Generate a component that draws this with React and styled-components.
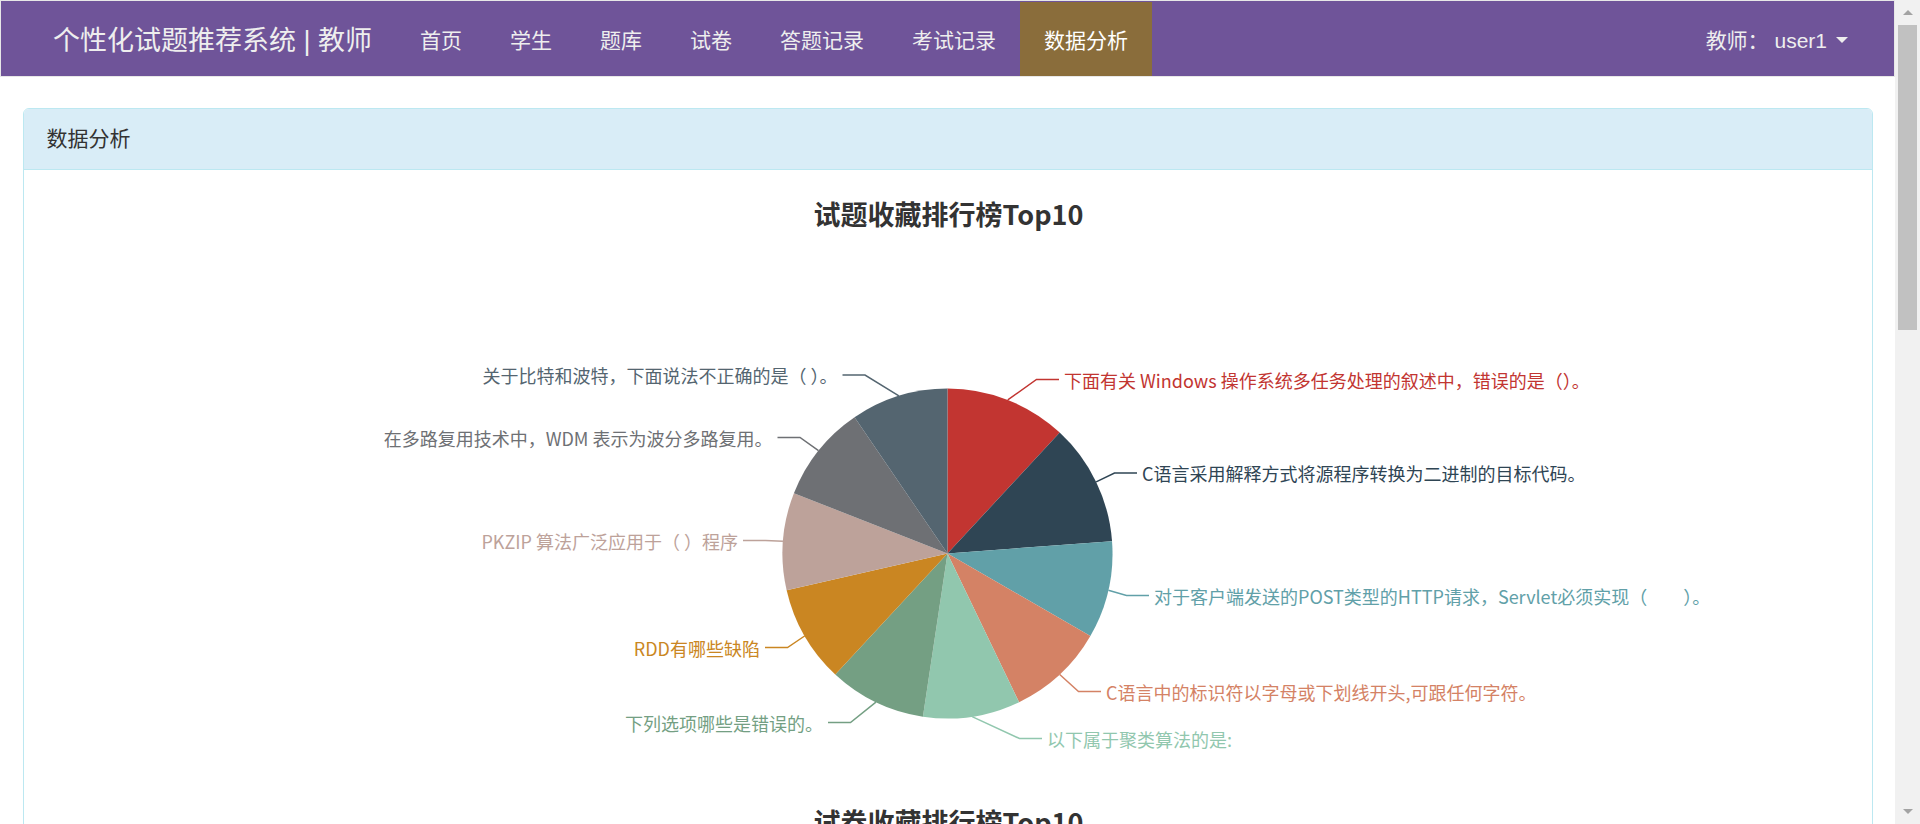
import React from 'react';
import styled, { createGlobalStyle } from 'styled-components';

const GlobalStyle = createGlobalStyle`
  * { box-sizing: border-box; }
  html, body { margin: 0; padding: 0; overflow: hidden; background: #fff; }
  body {
    font-family: "Liberation Sans", "Noto Sans CJK SC", sans-serif;
    font-size: 21px;
    color: #333;
  }
`;

const Shell = styled.div`
  display: flex;
  height: 100vh;
  overflow: hidden;
`;

const Page = styled.div`
  flex: 1;
  min-width: 0;
`;

const Navbar = styled.nav`
  display: flex;
  align-items: stretch;
  height: 77px;
  padding: 0 22px;
  margin-bottom: 31px;
  background: #6f5499;
  border: 1px solid #e7e7e7;
`;

const Brand = styled.div`
  display: flex;
  align-items: center;
  padding: 0 24px 0 30px;
  font-size: 27px;
  color: #eee;
  white-space: nowrap;
`;

const NavList = styled.ul`
  display: flex;
  margin: 0;
  padding: 0;
  list-style: none;
`;

const NavLink = styled.li`
  display: flex;
  align-items: center;
  padding: 0 24px;
  border-top: 1px solid transparent;
  background: ${(p) => (p.$active ? '#8a6d3b' : 'transparent')};
  background-clip: padding-box;
  color: ${(p) => (p.$active ? '#fff' : '#eee')};
  white-space: nowrap;
`;

const UserMenu = styled.div`
  display: flex;
  align-items: center;
  margin-left: auto;
  padding: 0 24px;
  color: #eee;
  white-space: pre;
`;

const Caret = styled.span`
  display: inline-block;
  width: 0;
  height: 0;
  margin-left: 9px;
  margin-top: 3px;
  border-top: 6px solid #eee;
  border-left: 6px solid transparent;
  border-right: 6px solid transparent;
`;

const Panel = styled.div`
  margin: 0 22px 59px 23px;
  border: 1px solid #bce8f1;
  border-radius: 6px;
`;

const PanelHeading = styled.div`
  padding: 15px 22.5px;
  line-height: 30px;
  font-size: 21px;
  color: #333;
  background: #d9edf7;
  border-bottom: 1px solid #bce8f1;
  border-radius: 5px 5px 0 0;
`;

const PanelBody = styled.div`
  display: flex;
  flex-direction: column;
  gap: 8px;
  padding: 22.5px;
`;

const ChartBox = styled.svg`
  display: block;
  width: 100%;
  height: 600px;
`;

const Rail = styled.div`
  display: flex;
  flex-direction: column;
  flex: 0 0 25px;
  height: 100vh;
  background: #f1f1f1;
`;

const ArrowBtn = styled.div`
  display: flex;
  align-items: center;
  justify-content: center;
  height: 25px;
  &::after {
    content: '';
    width: 0;
    height: 0;
    border-left: 5px solid transparent;
    border-right: 5px solid transparent;
    ${(p) => (p.$down ? 'border-top: 5px solid #a3a3a3;' : 'border-bottom: 5px solid #a3a3a3;')}
  }
`;

const Thumb = styled.div`
  height: 305px;
  margin: 0 3px;
  background: #c1c1c1;
`;

const RailSpace = styled.div`
  flex: 1;
`;

const PALETTE = ['#c23531', '#2f4554', '#61a0a8', '#d48265', '#91c7ae', '#749f83', '#ca8622', '#bda29a', '#6e7074', '#546570'];

const W = 1803;
const CX = 900.5;
const CY = 360.5;
const R = 165;

// bend point + end of the label line, as ECharts laid them out
const questionData = [
  { name: '下面有关 Windows 操作系统多任务处理的叙述中，错误的是（）。', value: 5, bend: [989.5, 186.5] },
  { name: 'C语言采用解释方式将源程序转换为二进制的目标代码。', value: 5, bend: [1067.5, 280] },
  { name: '对于客户端发送的POST类型的HTTP请求，Servlet必须实现（　　）。', value: 4, bend: [1079.5, 402.5] },
  { name: 'C语言中的标识符以字母或下划线开头,可跟任何字符。', value: 4, bend: [1031.5, 498.5] },
  { name: '以下属于聚类算法的是:', value: 4, bend: [972.5, 545.5] },
  { name: '下列选项哪些是错误的。', value: 4, bend: [803.5, 529.5] },
  { name: 'RDD有哪些缺陷', value: 4, bend: [740.5, 454.5] },
  { name: 'PKZIP 算法广泛应用于（ ）程序', value: 4, bend: [718.5, 347.5] },
  { name: '在多路复用技术中，WDM 表示为波分多路复用。', value: 4, bend: [753, 244.5] },
  { name: '关于比特和波特，下面说法不正确的是（ ）。', value: 4, bend: [818, 182] },
];

const paperData = [
  { name: '计算机网络期末测试', value: 6 },
  { name: 'C语言程序设计模拟卷', value: 5 },
  { name: '数据结构单元测验', value: 4 },
  { name: 'Java Web 开发综合练习', value: 4 },
  { name: '操作系统期中考试', value: 3 },
  { name: '大数据技术基础', value: 3 },
];

const answerData = [
  { name: 'user1', value: 8 },
  { name: 'user2', value: 6 },
  { name: 'user3', value: 5 },
  { name: 'user4', value: 4 },
  { name: 'user5', value: 3 },
];

const pt = (deg, r) => {
  const a = (deg * Math.PI) / 180;
  return [CX + r * Math.sin(a), CY - r * Math.cos(a)];
};

const slicePath = (a0, a1) => {
  const [x0, y0] = pt(a0, R);
  const [x1, y1] = pt(a1, R);
  const large = a1 - a0 > 180 ? 1 : 0;
  return `M${CX},${CY} L${x0},${y0} A${R},${R} 0 ${large} 1 ${x1},${y1} Z`;
};

const PieChart = ({ title, data }) => {
  const total = data.reduce((s, d) => s + d.value, 0);
  let start = 0;
  const slices = data.map((d, i) => {
    const a0 = start;
    const a1 = start + (d.value / total) * 360;
    start = a1;
    const mid = (a0 + a1) / 2;
    const edge = pt(mid, R);
    const right = mid < 180;
    const bend = d.bend || pt(mid, R + 22.5);
    const endX = bend[0] + (right ? 22.5 : -22.5);
    return { ...d, a0, a1, edge, bend, endX, right, color: PALETTE[i % PALETTE.length] };
  });

  return (
    <ChartBox viewBox={`0 0 ${W} 600`}>
      <text x={W / 2} y={20} textAnchor="middle" dominantBaseline="central" fontSize="27" fontWeight="bold" fill="#333" fontFamily='"Noto Sans CJK SC", sans-serif'>
        {title}
      </text>
      {slices.map((s) => (
        <path key={s.name + 'p'} d={slicePath(s.a0, s.a1)} fill={s.color} />
      ))}
      {slices.map((s) => (
        <g key={s.name}>
          <polyline
            points={`${s.edge[0]},${s.edge[1]} ${s.bend[0]},${s.bend[1]} ${s.endX},${s.bend[1]}`}
            fill="none"
            stroke={s.color}
            strokeWidth="1.5"
          />
          <text
            x={s.endX + (s.right ? 5 : -5)}
            y={s.bend[1]}
            textAnchor={s.right ? 'start' : 'end'}
            dominantBaseline="central"
            fontSize="18"
            fill={s.color}
            fontFamily='"Noto Sans CJK SC", sans-serif'
          >
            {s.name}
          </text>
        </g>
      ))}
    </ChartBox>
  );
};

const navItems = ['首页', '学生', '题库', '试卷', '答题记录', '考试记录', '数据分析'];

const App = () => {
  return (
    <Shell>
      <GlobalStyle />
      <Page>
        <Navbar>
          <Brand>个性化试题推荐系统 | 教师</Brand>
          <NavList>
            {navItems.map((item) => (
              <NavLink key={item} $active={item === '数据分析'}>{item}</NavLink>
            ))}
          </NavList>
          <UserMenu>
            教师： user1
            <Caret />
          </UserMenu>
        </Navbar>
        <Panel>
          <PanelHeading>数据分析</PanelHeading>
          <PanelBody>
            <PieChart title="试题收藏排行榜Top10" data={questionData} />
            <PieChart title="试卷收藏排行榜Top10" data={paperData} />
            <PieChart title="学生答题排行榜Top10" data={answerData} />
          </PanelBody>
        </Panel>
      </Page>
      <Rail>
        <ArrowBtn />
        <Thumb />
        <RailSpace />
        <ArrowBtn $down />
      </Rail>
    </Shell>
  );
};

export default App;
